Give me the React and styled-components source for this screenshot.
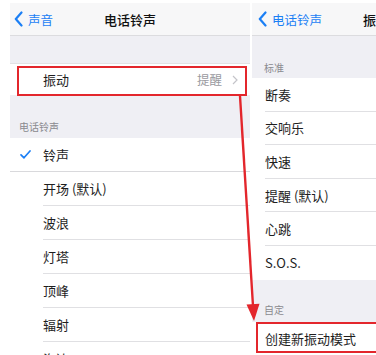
import React from 'react';
import styled, { createGlobalStyle } from 'styled-components';

const GlobalStyle = createGlobalStyle`
  html, body {
    margin: 0;
    padding: 0;
    background: #ffffff;
    overflow: hidden;
  }
  body {
    font-family: "Noto Sans CJK SC", "Noto Sans", "Liberation Sans", sans-serif;
    -webkit-font-smoothing: antialiased;
  }
`;

const Page = styled.div`
  position: relative;
  width: 376px;
  height: 355px;
  overflow: hidden;
  display: flex;
  align-items: flex-start;
  padding: 3px 0 0 10px;
  gap: 2px;
  box-sizing: border-box;
`;

const Screen = styled.div`
  flex: none;
  width: ${p => p.$width}px;
  height: 360px;
  background: #efeff4;
  display: flex;
  flex-direction: column;
  overflow: hidden;
`;

const NavBar = styled.div`
  height: 32px;
  flex: none;
  display: grid;
  grid-template-columns: 1fr auto 1fr;
  align-items: center;
  background: #f7f7f8;
  border-bottom: 1px solid #dcdcdf;
`;

const BackButton = styled.div`
  display: flex;
  align-items: center;
  gap: 5px;
  padding-left: ${p => p.$inset}px;
  color: #1b7ff5;
  font-size: 12.5px;
`;

const NavTitle = styled.div`
  font-size: 13px;
  font-weight: 500;
  color: #111;
`;

const Spacer = styled.div`
  height: ${p => p.$h}px;
  flex: none;
`;

const SectionHeader = styled.div`
  height: ${p => p.$h}px;
  flex: none;
  box-sizing: border-box;
  display: flex;
  align-items: flex-end;
  padding: 0 0 ${p => p.$pb}px ${p => p.$pl}px;
  font-size: 10px;
  color: #8a8a8f;
`;

const Group = styled.div`
  background: #ffffff;
  flex: none;
`;

const Row = styled.div`
  position: relative;
  height: ${p => p.$h || 34}px;
  display: flex;
  align-items: stretch;
  box-sizing: border-box;
  ${p => p.$full && 'border-bottom: 1px solid #d9d9dc;'}
  ${p => p.$top && 'border-top: 1px solid #e2e2e5;'}
`;

const CheckCell = styled.div`
  width: ${p => p.$w}px;
  flex: none;
  display: flex;
  align-items: center;
  padding-left: 10px;
  box-sizing: border-box;
`;

const RowBody = styled.div`
  flex: 1;
  display: flex;
  align-items: center;
  justify-content: space-between;
  padding-right: 12px;
  font-size: 13px;
  color: #1e1e1e;
  border-bottom: ${p => (p.$line ? '1px solid #e0e0e3' : 'none')};
`;

const Detail = styled.span`
  display: flex;
  align-items: center;
  gap: 10px;
  color: #9a9a9f;
  font-size: 12.5px;
`;

const Highlight = styled.div`
  position: absolute;
  left: ${p => p.$l}px;
  right: ${p => p.$r}px;
  top: ${p => p.$t}px;
  height: ${p => p.$h}px;
  border: 2px solid #e3262c;
  box-sizing: border-box;
  pointer-events: none;
`;

const ArrowLayer = styled.svg`
  position: absolute;
  left: 0;
  top: 0;
  pointer-events: none;
`;

const Chevron = ({ color = '#1b7ff5', w = 9, h = 16, sw = 2.2 }) => (
  <svg width={w} height={h} viewBox={`0 0 ${w} ${h}`}>
    <path d={`M${w - 1.5} 1.5 L1.8 ${h / 2} L${w - 1.5} ${h - 1.5}`} fill="none" stroke={color} strokeWidth={sw} strokeLinecap="round" strokeLinejoin="round" />
  </svg>
);

const RightChevron = () => (
  <svg width="6" height="10" viewBox="0 0 6 10">
    <path d="M1 1 L5 5 L1 9" fill="none" stroke="#c4c4c9" strokeWidth="1.2" />
  </svg>
);

const Check = () => (
  <svg width="11" height="9" viewBox="0 0 11 9">
    <path d="M1 4.8 L4 7.8 L10 1" fill="none" stroke="#1b7ff5" strokeWidth="1.7" strokeLinecap="round" strokeLinejoin="round" />
  </svg>
);

const ringtones = ['铃声', '开场 (默认)', '波浪', '灯塔', '顶峰', '辐射', '海边'];
const patterns = ['断奏', '交响乐', '快速', '提醒 (默认)', '心跳', 'S.O.S.'];

const RingtoneScreen = () => (
  <Screen $width={240}>
    <NavBar>
      <BackButton $inset={4}>
        <Chevron />
        声音
      </BackButton>
      <NavTitle>电话铃声</NavTitle>
      <div />
    </NavBar>
    <Spacer $h={27} />
    <Group>
      <Row $h={32} $top>
        <CheckCell $w={33} />
        <RowBody>
          振动
          <Detail>
            提醒
            <RightChevron />
          </Detail>
        </RowBody>
        <Highlight $l={7} $r={3} $t={2} $h={30} />
      </Row>
    </Group>
    <SectionHeader $h={43} $pb={4} $pl={9}>电话铃声</SectionHeader>
    <Group>
      {ringtones.map((name, i) => (
        <Row key={name} $full={i === 0}>
          <CheckCell $w={33}>{i === 0 && <Check />}</CheckCell>
          <RowBody $line={i !== 0}>{name}</RowBody>
        </Row>
      ))}
    </Group>
  </Screen>
);

const VibrationScreen = () => (
  <Screen $width={248}>
    <NavBar>
      <BackButton $inset={6}>
        <Chevron />
        电话铃声
      </BackButton>
      <NavTitle>振动</NavTitle>
      <div />
    </NavBar>
    <SectionHeader $h={42} $pb={3} $pl={12}>标准</SectionHeader>
    <Group>
      {patterns.map((name, i) => (
        <Row key={name} $h={33.6}>
          <CheckCell $w={13} />
          <RowBody $line={i !== patterns.length - 1}>{name}</RowBody>
        </Row>
      ))}
    </Group>
    <SectionHeader $h={42} $pb={5} $pl={12}>自定</SectionHeader>
    <Group>
      <Row>
        <CheckCell $w={13} />
        <RowBody>创建新振动模式</RowBody>
        <Highlight $l={4} $r={-4} $t={0} $h={31} />
      </Row>
    </Group>
  </Screen>
);

export default function App() {
  return (
    <>
      <GlobalStyle />
      <Page>
        <RingtoneScreen />
        <VibrationScreen />
        <ArrowLayer width="376" height="355" viewBox="0 0 376 355">
          <line x1="240" y1="96" x2="253" y2="306" stroke="#e3262c" strokeWidth="2.4" />
          <polygon points="254,321 246.5,304.5 259.5,303.7" fill="#e3262c" />
        </ArrowLayer>
      </Page>
    </>
  );
}
